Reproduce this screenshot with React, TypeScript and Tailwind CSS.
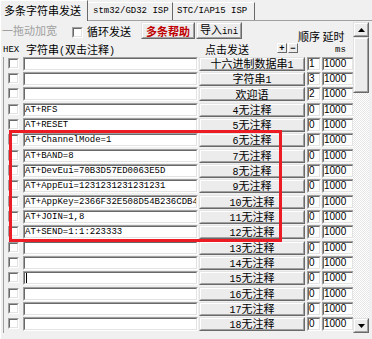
import type { ReactNode } from "react";

const CJK = "font-['Noto_Sans_CJK_SC',sans-serif]";
const MONO = "font-['Liberation_Mono','Noto_Sans_CJK_SC',monospace]";
const SANS = "font-['Liberation_Sans',sans-serif]";

type Row = { text: string; label: string; order: string; caret?: boolean };

const rows: Row[] = [
  { text: "", label: "十六进制数据串1", order: "1" },
  { text: "", label: "字符串1", order: "3" },
  { text: "", label: "欢迎语", order: "2" },
  { text: "AT+RFS", label: "4无注释", order: "0" },
  { text: "AT+RESET", label: "5无注释", order: "0" },
  { text: "AT+ChannelMode=1", label: "6无注释", order: "0" },
  { text: "AT+BAND=8", label: "7无注释", order: "0" },
  { text: "AT+DevEui=70B3D57ED0063E5D", label: "8无注释", order: "0" },
  { text: "AT+AppEui=1231231231231231", label: "9无注释", order: "0" },
  { text: "AT+AppKey=2366F32E508D54B236CDB4", label: "10无注释", order: "0" },
  { text: "AT+JOIN=1,8", label: "11无注释", order: "0" },
  { text: "AT+SEND=1:1:223333", label: "12无注释", order: "0" },
  { text: "", label: "13无注释", order: "0" },
  { text: "", label: "14无注释", order: "0" },
  { text: "", label: "15无注释", order: "0", caret: true },
  { text: "", label: "16无注释", order: "0" },
  { text: "", label: "17无注释", order: "0" },
  { text: "", label: "18无注释", order: "0" },
];

// ascii runs get the narrow mono face, the rest stays CJK
function Mixed({ text, ascii = "text-[10px]" }: { text: string; ascii?: string }) {
  const parts = text.split(/([\x20-\x7e]+)/).filter(Boolean);
  return (
    <>
      {parts.map((p, i) =>
        /^[\x20-\x7e]+$/.test(p) ? (
          <span key={i} className={`${MONO} ${ascii}`}>
            {p}
          </span>
        ) : (
          <span key={i}>{p}</span>
        )
      )}
    </>
  );
}

function Sunken({ className = "", children }: { className?: string; children?: ReactNode }) {
  return (
    <div className={`border border-t-[#a0a0a0] border-l-[#a0a0a0] border-r-white border-b-white ${className}`}>
      <div className="flex h-full w-full items-center overflow-hidden whitespace-nowrap border border-t-[#696969] border-l-[#696969] border-r-[#e3e3e3] border-b-[#e3e3e3] bg-white">
        {children}
      </div>
    </div>
  );
}

function Raised({ className = "", children }: { className?: string; children?: ReactNode }) {
  return (
    <div className={`border border-t-[#e3e3e3] border-l-[#e3e3e3] border-r-[#696969] border-b-[#696969] ${className}`}>
      <div className="flex h-full w-full items-center justify-center whitespace-nowrap border border-t-white border-l-white border-r-[#a0a0a0] border-b-[#a0a0a0] bg-[#ececec]">
        {children}
      </div>
    </div>
  );
}

function Check({ className = "" }: { className?: string }) {
  return (
    <div className={`h-[11px] w-[11px] shrink-0 border border-t-[#a0a0a0] border-l-[#a0a0a0] border-r-white border-b-white ${className}`}>
      <div className="h-full w-full border border-t-[#696969] border-l-[#696969] border-r-[#e3e3e3] border-b-[#e3e3e3] bg-white" />
    </div>
  );
}

function Arrow({ up }: { up?: boolean }) {
  return (
    <svg width="7" height="4" viewBox="0 0 7 4">
      <polygon points={up ? "3.5,0 7,4 0,4" : "0,0 7,0 3.5,4"} fill="#000" />
    </svg>
  );
}

// tiny +/- step buttons next to 点击发送
function Step({ sign }: { sign: string }) {
  return (
    <div className={`${SANS} mt-[1px] flex h-[10px] w-[10px] shrink-0 items-center justify-center border border-t-white border-l-white border-r-[#696969] border-b-[#696969] bg-[#ececec] text-[9px] font-bold leading-[8px]`}>
      {sign}
    </div>
  );
}

function Line({ row, index }: { row: Row; index: number }) {
  return (
    <div className={`flex items-start pl-[2px] ${index % 3 === 2 ? "h-[16px]" : "h-[15px]"}`}>
      <Check className="mt-[1px]" />
      <Sunken className="ml-[4px] h-[14px] w-[175px] shrink-0">
        {row.caret && <span className="ml-[1px] block h-[10px] w-px bg-black" />}
        <span className={`${MONO} text-[9px] leading-[10px]`}>{row.text}</span>
      </Sunken>
      <Raised className="ml-[1px] h-[14px] w-[106px] shrink-0">
        <span className="text-[11px] leading-[10px]">
          <Mixed text={row.label} />
        </span>
      </Raised>
      <Sunken className="ml-[2px] h-[14px] w-[14px] shrink-0">
        <span className={`${SANS} text-[10px] leading-[10px]`}>{row.order}</span>
      </Sunken>
      <Sunken className="ml-[1px] h-[14px] w-[32px] shrink-0">
        <span className={`${SANS} text-[10px] leading-[10px]`}>1000</span>
      </Sunken>
    </div>
  );
}

export default function App() {
  return (
    <div className={`relative h-[339px] w-[372px] overflow-hidden bg-[#f0f0f0] text-black ${CJK}`}>
      {/* tab strip */}
      <div className="flex h-[20px] items-end">
        <div className="relative z-10 -mb-px h-[21px] w-[88px] shrink-0 border-l border-t border-r border-l-white border-t-white border-r-[#696969] bg-[#f0f0f0] pl-[3px] pt-[3px] text-[11px] leading-[12px]">
          多条字符串发送
        </div>
        <div className="flex h-[18px] w-[85px] shrink-0 items-center border-t border-r border-t-white border-r-[#696969] pl-[5px]">
          <span className={`${MONO} text-[9px] leading-none`}>stm32/GD32 ISP</span>
        </div>
        <div className="flex h-[18px] w-[82px] shrink-0 items-center border-t border-r border-t-white border-r-[#696969] pl-[4px]">
          <span className={`${MONO} text-[9px] leading-none`}>STC/IAP15 ISP</span>
        </div>
      </div>

      {/* tab page */}
      <div className="flex h-[319px] border-t border-l border-t-[#a0a0a0] border-l-white">
        <div className="flex w-[352px] shrink-0 flex-col">
          {/* toolbar */}
          <div className="flex h-[21px] items-start">
            <span className="mt-[3px] w-[71px] shrink-0 pl-[1px] text-[11px] leading-[12px] text-[#a0a0a0]">一拖动加宽</span>
            <Check className="mt-[6px]" />
            <span className="ml-[4px] mt-[4px] w-[44px] shrink-0 text-[11px] leading-[12px]">循环发送</span>
            <Raised className="ml-[10px] mt-[1px] h-[17px] w-[54px] shrink-0">
              <span className="text-[11px] font-bold leading-[12px] text-[#c00000]">多条帮助</span>
            </Raised>
            <Raised className="ml-[1px] mt-[1px] h-[17px] w-[46px] shrink-0">
              <span className="text-[11px] leading-[12px]">
                <Mixed text="导入ini" ascii="text-[9px]" />
              </span>
            </Raised>
            <span className="ml-[56px] mt-[9px] whitespace-nowrap text-[11px] leading-[12px]">顺序 延时</span>
          </div>

          {/* column header */}
          <div className="flex h-[15px] items-start">
            <span className={`${MONO} mt-[4px] w-[25px] shrink-0 pl-[2px] text-[9px] leading-[8px]`}>HEX</span>
            <span className="mt-[1px] w-[179px] shrink-0 whitespace-nowrap text-[11px] leading-[12px]">
              <Mixed text="字符串(双击注释)" ascii="text-[10px]" />
            </span>
            <span className="mt-[1px] w-[72px] shrink-0 text-[11px] leading-[12px]">点击发送</span>
            <Step sign="+" />
            <span className="w-px shrink-0" />
            <Step sign="−" />
            <span className={`${MONO} ml-[37px] mt-[4px] text-[9px] leading-[8px]`}>ms</span>
          </div>

          {/* rows */}
          <div className="ml-[2px] border-l border-l-[#a0a0a0] pl-[2px]">
            {rows.map((r, i) => (
              <Line key={i} row={r} index={i} />
            ))}
          </div>
        </div>

        {/* scrollbar */}
        <div className="mt-[1px] flex h-[311px] w-[16px] shrink-0 flex-col">
          <Raised className="h-[15px] shrink-0">
            <Arrow up />
          </Raised>
          <Raised className="h-[56px] shrink-0" />
          <div className="flex-1 bg-[image:repeating-conic-gradient(#ffffff_0_25%,#e6e6e6_0_50%)] bg-[length:2px_2px]" />
          <Raised className="h-[15px] shrink-0">
            <Arrow />
          </Raised>
        </div>
      </div>

      {/* red highlight drawn over the rows */}
      <div className="absolute left-[9px] top-[130px] h-[112px] w-[273px] border-[3px] border-[#ed1c24]" />
    </div>
  );
}
